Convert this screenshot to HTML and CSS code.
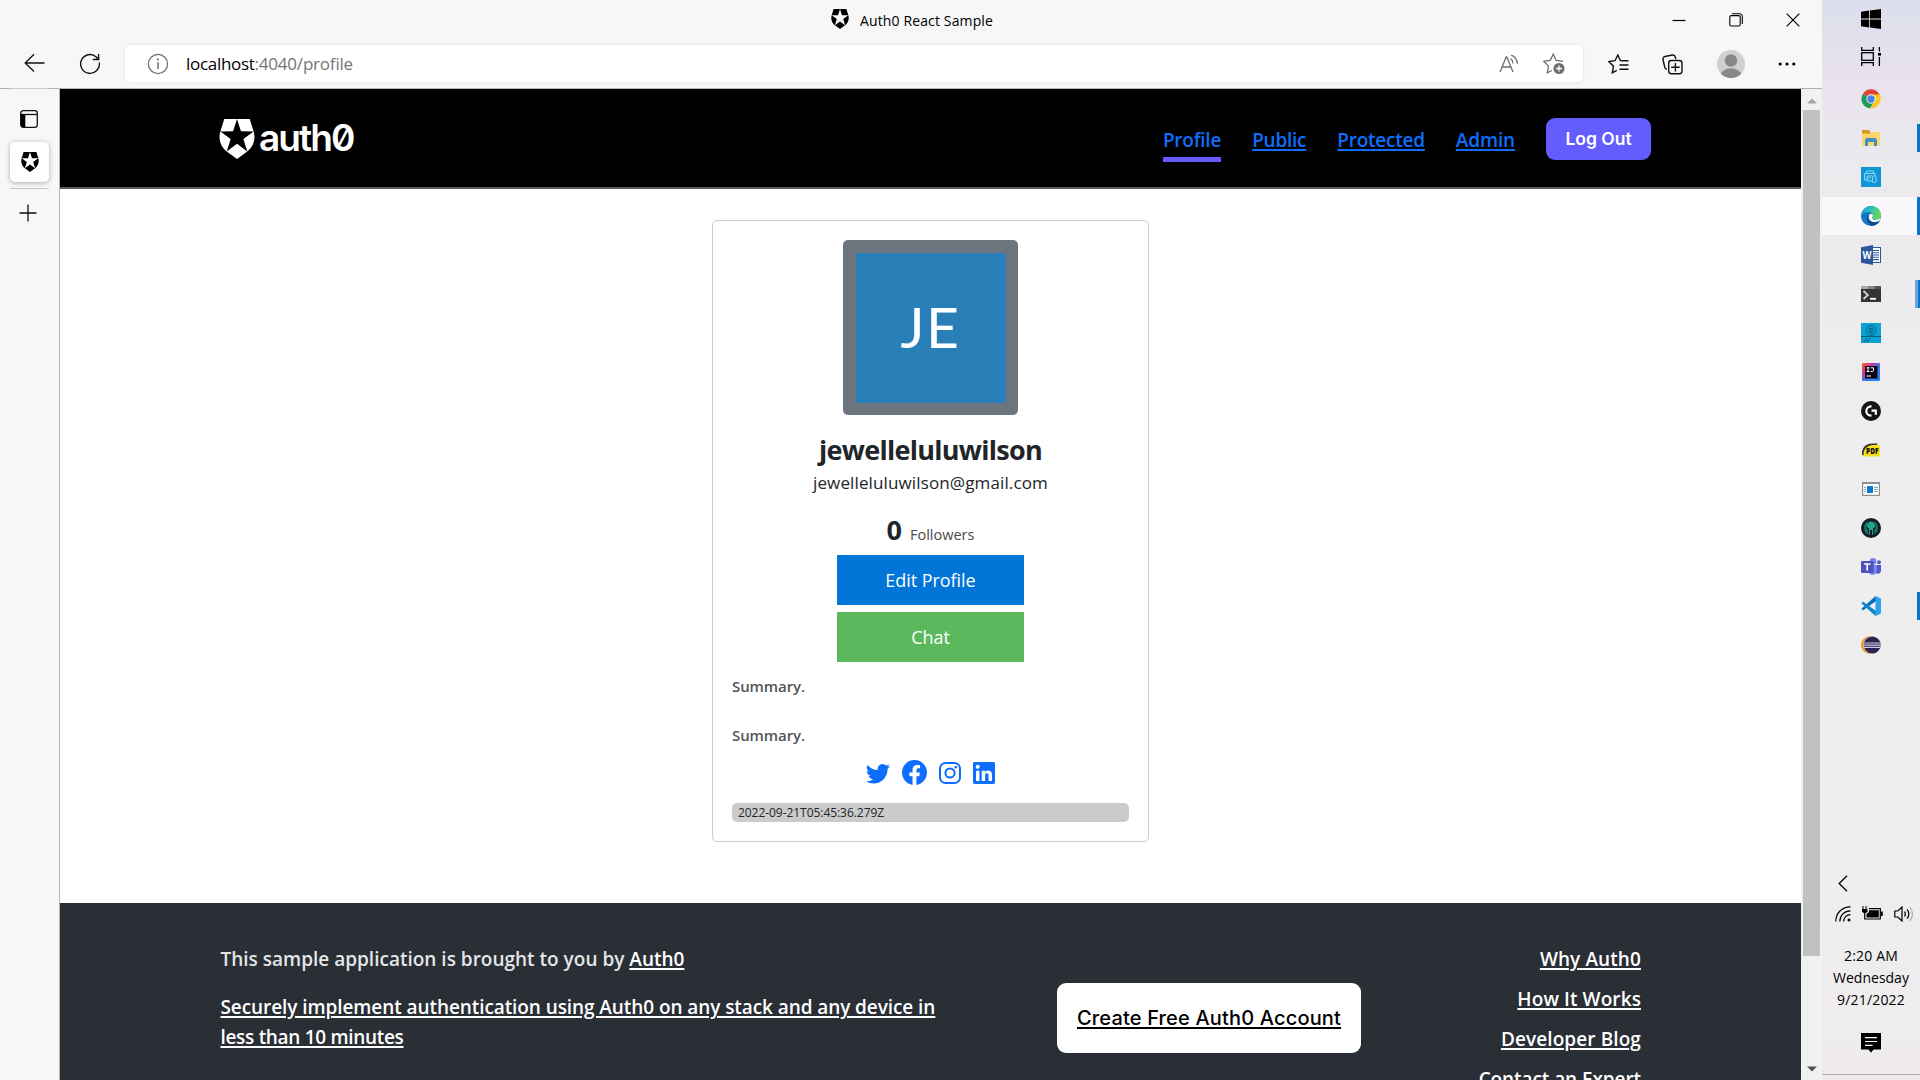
FILE: index.html
```
<!DOCTYPE html>
<html lang="en">
<head>
<meta charset="utf-8">
<title>Auth0 React Sample</title>
<link rel="stylesheet" href="styles.css">
</head>
<body>
<svg class="defs" width="0" height="0">
  <symbol id="shield" viewBox="1.5 0 21 24"><path d="M21.98 7.448L19.62 0H4.347L2.02 7.448c-1.352 4.312.03 9.206 3.815 12.015L12.007 24l6.157-4.552c3.755-2.81 5.182-7.688 3.815-12.015l-6.16 4.58 2.343 7.45-6.157-4.597-6.158 4.58 2.358-7.433-6.188-4.55 7.63-.045L12.008 0l2.356 7.404 7.615.044z"/></symbol>
</svg>

<div class="browser">
  <header class="titlebar">
    <div class="tab-title"><svg class="favicon" width="18" height="20"><use href="#shield"/></svg><span class="tab-name">Auth0 React Sample</span></div>
    <div class="window-controls">
      <svg width="14" height="14" viewBox="0 0 14 14"><path d="M.5 7.5h13" stroke="#000" stroke-width="1.2"/></svg>
      <svg width="14" height="14" viewBox="0 0 14 14" fill="none" stroke="#000" stroke-width="1.1"><rect x=".8" y="2.6" width="10.4" height="10.4" rx="1.5"/><path d="M3 .8h7.5a2.8 2.8 0 0 1 2.8 2.8V11"/></svg>
      <svg width="14" height="14" viewBox="0 0 14 14"><path d="M.7.7l12.6 12.6M13.3.7L.7 13.3" stroke="#000" stroke-width="1.2"/></svg>
    </div>
  </header>

  <div class="toolbar">
    <svg class="back" width="22" height="20" viewBox="0 0 22 20" fill="none" stroke="#111" stroke-width="1.3"><path d="M20.500 10H1.200M10 1.200L1.200 10l8.800 8.500"/></svg>
    <svg class="reload" width="22" height="22" viewBox="0 0 22 22" fill="none" stroke="#111" stroke-width="1.400"><path d="M20.300 9.500A9.400 9.400 0 1 1 17.300 4l2 2.200M19.600 1v5.500h-5.800"/></svg>
    <div class="address">
      <svg width="22" height="22" viewBox="0 0 22 22" fill="none" stroke="#6e6e6e" stroke-width="1.200"><circle cx="11" cy="11" r="9.600"/><path d="M11 9.300v6.700" stroke-width="1.500"/><circle cx="11" cy="6.500" r=".5"/></svg>
      <span class="url"><b>localhost</b>:4040/profile</span>
      <svg class="read" width="20" height="20" viewBox="0 0 20 20" fill="none" stroke="#6e6e6e" stroke-width="1.300"><path d="M1 18L7.200 3h.6L14 18M3.200 13h8.600M11.500 4.500c1.500 1 2.400 2.700 2.500 5M12.200 1.200c3.800 1.600 6 4.600 6.300 8.600"/></svg>
      <svg class="fav" width="22" height="22" viewBox="0 0 22 22" fill="none" stroke="#6e6e6e" stroke-width="1.300"><path d="M20 8.300l-6.800-1L10.200 1.200l-3 6.100-6.500 1 4.800 4.800-1.200 6.700 4.500-2.300"/><circle cx="16" cy="15.500" r="5.500" fill="#6e6e6e" stroke="none"/><path d="M16 12.500v6M13 15.500h6" stroke="#fff"/></svg>
    </div>
    <div class="actions">
      <svg width="21" height="20" viewBox="0 0 21 20" fill="none" stroke="#111" stroke-width="1.400"><path d="M12.500 6.700L9.800 1 7 6.700.9 7.600l4.600 4.600-1.200 6.600 4.500-2.400M12.500 6.800h8M11.500 11h9M11.500 15.300h9"/></svg>
      <svg width="21" height="21" viewBox="0 0 21 21" fill="none" stroke="#111" stroke-width="1.400"><path d="M4.800 15.300a2.600 2.600 0 0 1-2-2L1 5.500a2.600 2.600 0 0 1 2-3L10.300 1a2.600 2.600 0 0 1 3 2l.5 2"/><rect x="6.700" y="6.500" width="13.300" height="13.300" rx="2.700"/><path d="M13.400 9v8.500M9.200 13.200h8.500"/></svg>
      <svg width="28" height="28" viewBox="0 0 28 28"><defs><clipPath id="round"><circle cx="14" cy="14" r="14"/></clipPath></defs><g clip-path="url(#round)"><rect width="28" height="28" fill="#d2d0ce"/><circle cx="14" cy="10.500" r="6.200" fill="#8a8886"/><ellipse cx="14" cy="25.500" rx="10.500" ry="7.200" fill="#8a8886"/></g></svg>
      <svg width="18" height="4" viewBox="0 0 18 4"><circle cx="2.200" cy="2" r="1.600"/><circle cx="9" cy="2" r="1.600"/><circle cx="15.800" cy="2" r="1.600"/></svg>
    </div>
  </div>

  <div class="body-row">
    <aside class="tabs">
      <div class="rule"></div>
      <svg class="panes" width="18" height="18" viewBox="0 0 18 18"><rect x=".7" y=".7" width="16.600" height="16.600" rx="2.500" fill="none" stroke="#111" stroke-width="1.300"/><path d="M1 4.500h4.300V17H3a2 2 0 0 1-2-2z"/><path d="M1 4.500h16" stroke="#111" stroke-width="1.300"/></svg>
      <div class="active-tab"><svg width="18" height="20"><use href="#shield"/></svg></div>
      <div class="rule"></div>
      <svg class="plus" width="18" height="18" viewBox="0 0 18 18"><path d="M9 .5v17M.5 9h17" stroke="#111" stroke-width="1.300"/></svg>
    </aside>

    <div class="page">
      <nav class="nav">
        <a class="brand"><svg width="36" height="40" fill="#fff"><use href="#shield"/></svg><span class="wordmark">auth0</span></a>
        <div class="nav-links">
          <a class="active">Profile</a><a>Public</a><a>Protected</a><a class="admin">Admin</a>
          <button class="logout">Log Out</button>
        </div>
      </nav>

      <main class="content">
        <section class="card">
          <div class="avatar"><div class="initials">JE</div></div>
          <h1 class="name">jewelleluluwilson</h1>
          <p class="email">jewelleluluwilson@gmail.com</p>
          <p class="followers"><b>0</b><span>Followers</span></p>
          <button class="btn edit">Edit Profile</button>
          <button class="btn chat">Chat</button>
          <p class="summary">Summary.</p>
          <p class="summary second">Summary.</p>
          <div class="social">
            <svg width="24" height="24" viewBox="0 0 16 16"><path d="M5.026 15c6.038 0 9.341-5.003 9.341-9.334 0-.14 0-.282-.006-.422A6.685 6.685 0 0 0 16 3.542a6.658 6.658 0 0 1-1.889.518 3.301 3.301 0 0 0 1.447-1.817 6.533 6.533 0 0 1-2.087.793A3.286 3.286 0 0 0 7.875 6.030a9.325 9.325 0 0 1-6.767-3.429 3.289 3.289 0 0 0 1.018 4.382A3.323 3.323 0 0 1 .64 6.575v.045a3.288 3.288 0 0 0 2.632 3.218 3.203 3.203 0 0 1-.865.115 3.230 3.230 0 0 1-.614-.057 3.283 3.283 0 0 0 3.067 2.277A6.588 6.588 0 0 1 .78 13.580a6.320 6.320 0 0 1-.78-.045A9.344 9.344 0 0 0 5.026 15z"/></svg>
            <svg width="25" height="25" viewBox="0 0 16 16"><path d="M16 8.049c0-4.446-3.582-8.050-8-8.050C3.580 0-.002 3.603-.002 8.050c0 4.017 2.926 7.347 6.750 7.951v-5.625h-2.030V8.050H6.750V6.275c0-2.017 1.195-3.131 3.022-3.131.876 0 1.791.157 1.791.157v1.980h-1.009c-.993 0-1.303.621-1.303 1.258v1.510h2.218l-.354 2.326H9.250V16c3.824-.604 6.750-3.934 6.750-7.951z"/></svg>
            <svg width="22" height="22" viewBox="0 0 22 22"><rect x="1" y="1" width="20" height="20" rx="5.500" fill="none" stroke="#0d6efd" stroke-width="2"/><circle cx="11" cy="11" r="4.600" fill="none" stroke="#0d6efd" stroke-width="2"/><circle cx="16.800" cy="5.200" r="1.300"/></svg>
            <svg width="22" height="22" viewBox="3 3 18 18"><path d="M19.800 3A1.200 1.200 0 0 1 21 4.200v15.600a1.200 1.200 0 0 1-1.200 1.200H4.200A1.200 1.200 0 0 1 3 19.800V4.200A1.200 1.200 0 0 1 4.200 3h15.600m-1.300 15.500v-5.300a3.260 3.260 0 0 0-3.260-3.260c-.85 0-1.840.52-2.320 1.300v-1.110h-2.790v8.370h2.790v-4.930c0-.77.62-1.400 1.390-1.400a1.400 1.400 0 0 1 1.400 1.400v4.930h2.790M6.880 8.560a1.680 1.680 0 0 0 1.680-1.680c0-.93-.75-1.690-1.680-1.690a1.690 1.690 0 0 0-1.690 1.690c0 .93.76 1.680 1.690 1.680m1.390 9.940v-8.370H5.500v8.370h2.770z"/></svg>
          </div>
          <div class="stamp">2022-09-21T05:45:36.279Z</div>
        </section>
      </main>

      <footer class="footer">
        <div class="about">
          <p><span class="lead">This sample application is brought to you by</span> <a>Auth0</a></p>
          <p class="pitch"><a>Securely implement authentication using Auth0 on any stack and any device in<br><span class="tail">less than 10 minutes</span></a></p>
        </div>
        <a class="create">Create Free Auth0 Account</a>
        <div class="resources"><a>Why Auth0</a><a>How It Works</a><a>Developer Blog</a><a class="expert">Contact an Expert</a></div>
      </footer>
    </div>

    <div class="scrollbar">
      <svg width="10" height="6" viewBox="0 0 10 6"><path d="M0 5.500L5 .5l5 5z" fill="#a3a3a3"/></svg>
      <div class="thumb"></div>
      <svg class="down" width="10" height="6" viewBox="0 0 10 6"><path d="M0 .5l5 5 5-5z" fill="#505050"/></svg>
    </div>
  </div>
</div>

<aside class="taskbar">
  <div class="sys"><svg width="20" height="20" viewBox="0 0 20 20"><path d="M0 2.800L8.200 1.600V9.600H0zM9 1.500L20 0v9.600H9zM0 10.400h8.200v8L0 17.300zM9 10.400h11V20L9 18.500z"/></svg></div>
  <div class="sys view"><svg width="20" height="19" viewBox="0 0 20 19" fill="none" stroke="#000" stroke-width="1.300"><path d="M.7 0v3.300h11.600V0M.7 19v-3.300h11.600V19"/><rect x=".7" y="5.700" width="11.600" height="7.600"/><path d="M18.400 0v4.500M18.400 10v9"/><path d="M17 6h3v2.600h-3z" fill="#000" stroke="none"/></svg></div>

  <div class="apps">
    <div class="app"><svg width="20" height="20" viewBox="0 0 20 20"><path d="M10 10L1.800 5A9.500 9.500 0 0 1 18.500 5.600z" fill="#dd4437"/><path d="M10 10L1.800 5a9.500 9.500 0 0 0 7.200 14.400l4.500-7.600z" fill="#1c9b55"/><path d="M10 5.600h8.500A9.500 9.500 0 0 1 9 19.400l4.800-7.300z" fill="#fdc81c"/><circle cx="10" cy="10" r="4.700" fill="#f5f5f5"/><circle cx="10" cy="10" r="3.700" fill="#4582ea"/></svg></div>
    <div class="app running"><svg width="20" height="20" viewBox="0 0 20 20"><path d="M1 2h7l1.500 2v3H1z" fill="#d79a1b"/><path d="M1 5.500h9L11.500 4H19v13.500H1z" fill="#fcd667"/><path d="M4 18v-5.500A2.500 2.500 0 0 1 6.500 10h7a2.500 2.500 0 0 1 2.500 2.500V18h-3v-4H7v4z" fill="#4390c8"/></svg></div>
    <div class="app"><svg width="20" height="20" viewBox="0 0 20 20"><rect width="20" height="20" fill="#0f97d5"/><g fill="none" stroke="#8ed5f3" stroke-width="1"><path d="M5.500 6V4h7v2M6 13H3.500V6.500H14V9M6 9h5M6 11h4M6 9v5h5"/><rect x="11.500" y="9" width="3.500" height="6.500" rx=".8"/></g></svg></div>
    <div class="app current"><svg width="20" height="20" viewBox="0 0 20 20"><defs><linearGradient id="eg" x1="0" y1="0" x2="1" y2=".4"><stop offset="0" stop-color="#159bd0"/><stop offset=".55" stop-color="#35c1b7"/><stop offset="1" stop-color="#6ad84f"/></linearGradient></defs><circle cx="10" cy="10" r="10" fill="#1377c8"/><path d="M.2 8.800C1 3.500 5 0 10 0c5.500 0 10 4 10 8.500 0 3-2.500 5-5.300 5-2.300 0-3.500-.8-3.500-1.500 0-.8.900-1 .900-2.500 0-2-2-3.600-5-3.600C4 5.900 1.300 7 .2 8.800z" fill="url(#eg)"/><path d="M7.600 8.200c-3 2.300-2.200 8.800 3.200 11.700 3.500-.2 6.500-2 8-4.600.3-.5-.2-.7-.6-.5-5 2.300-10.800-.6-10.600-6.600z" fill="#134b93"/><path d="M7.700 10.500C8 8 9.600 7 11.500 8.200c1.200 1.800-.8 3-.2 4.200.6 1 2 1.400 3.700 1.400 2 0 3.700-1 4.700-2.800-.3 2.300-1 3.500-1.800 4.300C12 17.500 7.400 15 7.700 10.500z" fill="#f7f8fa"/></svg></div>
    <div class="app"><svg width="20" height="20" viewBox="0 0 20 20"><rect x="9" y="2.500" width="10.500" height="15" fill="#fff" stroke="#2b579a"/><path d="M12 5.500h6M12 7.800h6M12 10h6M12 12.300h6M12 14.600h6" stroke="#2b579a" stroke-width="1.100"/><path d="M0 2.200L12 0v20L0 17.800z" fill="#2b579a"/><text x="1.400" y="14" class="glyph" font-size="11" textLength="9" lengthAdjust="spacingAndGlyphs">W</text></svg></div>
    <div class="app running stacked"><svg width="20" height="20" viewBox="0 0 20 20"><rect y="2" width="20" height="16" fill="#333"/><path d="M0 2h7v3H0z" fill="#aaa"/><path d="M7 2h7v3H7z" fill="#858585"/><path d="M14 2h6v3h-6z" fill="#555"/><path d="M2.500 7l4.300 4-4.300 4" fill="none" stroke="#ccc" stroke-width="2"/><path d="M9 14.800h6" stroke="#fff" stroke-width="1.800"/></svg></div>
    <div class="app"><svg width="20" height="20" viewBox="0 0 20 20"><rect width="20" height="20" fill="#0ba2d2"/><g fill="none" stroke="#075f83"><circle cx="10" cy="7.500" r="5"/><circle cx="10" cy="7.500" r="2.500"/><path d="M10 6v3M0 13.500h20M3 19l3-4M6 19l3-4" stroke-width="1.100"/></g></svg></div>
    <div class="app"><svg width="20" height="20" viewBox="0 0 20 20"><defs><linearGradient id="ij" x1="0" y1="0" x2="1" y2="1"><stop offset="0" stop-color="#f9622d"/><stop offset=".3" stop-color="#d3359a"/><stop offset=".55" stop-color="#3a78f2"/><stop offset="1" stop-color="#1f87f5"/></linearGradient></defs><rect x="1" y="1" width="18" height="18" rx="1" fill="url(#ij)"/><rect x="4" y="4" width="12.500" height="12.500" fill="#0b0312"/><path d="M5.500 5.800h3M7 5.500v4M5.500 9.500h3M9.800 5.800h2.700v2.700c0 .7-.5 1-1.300 1H9.800M5.500 14h4.500" fill="none" stroke="#fff" stroke-width="1"/></svg></div>
    <div class="app"><svg width="20" height="20" viewBox="0 0 20 20"><circle cx="10" cy="10" r="10" fill="#141414"/><path d="M10.500 5.300H10a4.700 4.700 0 0 0 0 9.400h.5M10.500 9.700h4.300v4" fill="none" stroke="#fff" stroke-width="2.200"/></svg></div>
    <div class="app"><svg width="20" height="20" viewBox="0 0 20 20"><path d="M1 15C.5 8 4 4 11 3.500h6L5 16z" fill="#333"/><path d="M2.500 16.500C2 9 6 5.500 12 5h6q1 0 1 1v9.500q0 1-1 1z" fill="#f6e21b"/><text x="5" y="14.300" class="glyph dark" font-size="8" textLength="12.500" lengthAdjust="spacingAndGlyphs">PDF</text></svg></div>
    <div class="app"><svg width="20" height="20" viewBox="0 0 20 20"><rect x="1.600" y="3.600" width="16.800" height="12.800" fill="#fff" stroke="#8b8f92" stroke-width="1.200"/><path d="M1.600 4.500h16.800" stroke="#8b8f92"/><rect x="6" y="7" width="6" height="7" fill="#1377d0"/><path d="M3 8.500h2M3 10.500h2M3 12.500h2M13 8.500h4M13 10.500h4M13 12.500h4" stroke="#8aa" stroke-width="1"/></svg></div>
    <div class="app"><svg width="20" height="20" viewBox="0 0 20 20"><circle cx="10" cy="10" r="10" fill="#141c23"/><path d="M7.500 3a7.500 7.500 0 0 0-.5 13.500V12a4 4 0 0 1-1-5zM12.500 3a7.500 7.500 0 0 1 .5 13.500V12a4 4 0 0 0 1-5z" fill="#176f68"/><path d="M10 3.500c2.500 0 4 2.500 4 4.500 0 1.500-1.500 2-2 3v6h-1v-5H9v5H8v-6c-.5-1-2-1.500-2-3 0-2 1.500-4.500 4-4.500z" fill="#20a58b"/></svg></div>
    <div class="app"><svg width="20" height="20" viewBox="0 0 20 20"><circle cx="12" cy="4.300" r="3.400" fill="#7b83eb"/><circle cx="18" cy="5.200" r="2" fill="#5059c9"/><path d="M15 8h5v6a3 3 0 0 1-5 2z" fill="#5059c9"/><path d="M8 8h8v6a4.600 4.600 0 0 1-8.800 1z" fill="#7b83eb"/><rect y="4" width="12.500" height="12" rx="1" fill="#4b53bc"/><path d="M3 7h6.500M6.200 7v6.500" stroke="#fff" stroke-width="1.700"/></svg></div>
    <div class="app running"><svg width="20" height="20" viewBox="0 0 20 20"><path d="M14.500 0L20 2.500v15L14.500 20z" fill="#29a3ea"/><path d="M14.500 0L.4 12.800l1.500 1.700L15 5z" fill="#0a72b4"/><path d="M14.500 20L.4 7.200l1.500-1.700L15 15z" fill="#1185cc"/></svg></div>
    <div class="app"><svg width="20" height="20" viewBox="0 0 20 20"><circle cx="9" cy="10" r="9" fill="#f7941e"/><circle cx="11.200" cy="10" r="9" fill="#e9e6ef"/><circle cx="11.200" cy="10" r="8.600" fill="#2c2255"/><path d="M2.800 8h17M2.600 10.200h17.400M2.800 12.400h17" stroke="#cfcbe0" stroke-width="1.200"/></svg></div>
  </div>

  <div class="tray">
    <svg class="chevron" width="10" height="17" viewBox="0 0 10 17"><path d="M9 .7L1.200 8.500 9 16.300" fill="none" stroke="#000" stroke-width="1.300"/></svg>
    <div class="status">
      <svg width="16" height="16" viewBox="0 0 16 16" fill="none" stroke="#000" stroke-width="1.200"><path d="M.8 15.500C.8 7 7 .8 15.500.8M4.800 15.500C4.800 9.300 9.300 4.800 15.500 4.800M8.700 15.500c0-3.900 2.900-6.800 6.800-6.800"/><circle cx="14" cy="14" r="1.500" fill="#000" stroke="none"/></svg>
      <svg width="21" height="15" viewBox="0 0 21 15"><path d="M1 0v3M4 0v3" stroke="#000"/><path d="M0 3h5.500v2.500L4 7H1.500L0 5.500z"/><path d="M2.700 6v7h15.600V2.600H7" fill="none" stroke="#000" stroke-width="1.200"/><path d="M7 4.200h9.800v7.400H4.500V8L7 6z"/><path d="M19 5.500h1.800v4.500H19z"/></svg>
      <svg width="20" height="16" viewBox="0 0 20 16" fill="none" stroke="#000" stroke-width="1.200"><path d="M.8 5h3L8 1v14l-4.200-4h-3z"/><path d="M10.500 5.500q1.800 2.500 0 5M13 3.300q3.600 4.700 0 9.400"/><path d="M15.700 1q5.500 7 0 14" stroke="#aaa"/></svg>
    </div>
    <div class="clock"><span class="time">2:20 AM</span><span>Wednesday</span><span class="date">9/21/2022</span></div>
    <svg class="notes" width="20" height="20" viewBox="0 0 20 20"><path d="M0 0h20v16.500h-7.500L10 19.700 7.500 16.500H0z"/><path d="M4 4.700h12M4 8.500h12M4 12.300h7.500" stroke="#fff" stroke-width="1.200"/></svg>
    <div class="edge"></div>
  </div>
</aside>
</body>
</html>
```
FILE: styles.css
```
* { box-sizing: border-box; }
body { margin: 0; display: flex; width: 1920px; height: 1080px; overflow: hidden; font-family: "Open Sans", "Noto Sans", sans-serif; color: #212529; }
svg { display: block; flex: none; }
p, h1 { margin: 0; }
button { border: 0; padding: 0; font-family: inherit; }
.defs { position: absolute; }
.glyph { font-family: "Open Sans", sans-serif; font-weight: 700; fill: #fff; }
.glyph.dark { font-weight: 800; fill: #111; }

.browser { width: 1822px; display: flex; flex-direction: column; background: #f7f7f7; }
.titlebar { height: 41px; display: grid; grid-template-columns: 831px 1fr auto; }
.tab-title { grid-column: 2; display: flex; padding-top: 9px; gap: 11px; }
.tab-name { font-size: 14px; line-height: 24px; letter-spacing: .13px; color: #000; }
.window-controls { display: flex; gap: 43px; padding: 13px 22px 0 0; }

.toolbar { height: 48px; display: flex; border-bottom: 1px solid #b0b0b0; }
.back { margin: 12px 0 0 24px; }
.reload { margin: 12px 0 0 33px; }
.address { display: flex; align-items: center; width: 1458px; height: 37px; margin: 4px 0 0 24px; padding: 0 18px 0 22px; background: #fff; border-radius: 5px; box-shadow: 0 0 3px rgba(0,0,0,.12); }
.url { margin-left: 17px; flex: 1; font-size: 17px; line-height: 36px; letter-spacing: -.2px; color: #757575; }
.url b { font-weight: 400; letter-spacing: -.3px; color: #000; }
.read { margin-right: 24px; }
.actions { flex: 1; display: flex; align-items: center; justify-content: space-between; padding: 0 26px 0 25px; height: 46px; }

.body-row { flex: 1; display: flex; min-height: 0; }
.tabs { width: 60px; border-right: 1px solid #b5b5b5; padding-left: 10px; margin-top: -1px; }
.rule { height: 1px; width: 39px; background: #c8c8c8; }
.panes { margin: 21px 0 0 10px; }
.active-tab { width: 39px; height: 40px; margin: 14px 0 6px; border-radius: 5px; background: #fff; box-shadow: 0 1px 5px rgba(0,0,0,.3); display: grid; place-items: center; }
.plus { margin: 15px 0 0 9px; }

.page { width: 1741px; background: #fff; display: flex; flex-direction: column; overflow: hidden; }
.nav { height: 100px; flex: none; display: flex; justify-content: space-between; align-items: flex-start; background: #000; border-bottom: 2px solid #5a5a5a; padding: 29px 150px 0 159px; }
.brand { display: flex; gap: 4px; padding-top: 1px; }
.wordmark { font: 600 37px/38px Inter, sans-serif; letter-spacing: -1.900px; color: #fff; font-feature-settings: "zero"; }
.nav-links { display: flex; gap: 31px; }
.nav-links a { height: 34px; margin-top: 10px; font-size: 19px; font-weight: 600; line-height: 24px; letter-spacing: -.24px; color: #0d6efd; text-decoration: underline; text-decoration-thickness: 2px; text-underline-offset: 2px; text-decoration-skip-ink: none; }
.nav-links .admin { letter-spacing: -.14px; }
.nav-links .active { text-decoration: none; border-bottom: 5px solid #635dff; }
.logout { width: 105px; height: 42px; border-radius: 9px; background: #635dff; color: #fff; font: 600 17.500px/42px Inter, sans-serif; }

.content { flex: none; height: 714px; padding-top: 31px; }
.card { width: 437px; margin-left: 652px; padding: 19px; border: 1px solid #ccc; border-radius: 5px; display: flex; flex-direction: column; align-items: center; }
.avatar { width: 175px; height: 175px; padding: 12.500px; border-radius: 5px; background: #6c757d; }
.initials { height: 150px; background: #2980b9; color: #fff; text-align: center; font: 400 57px/146px Lato, sans-serif; letter-spacing: 1.500px; }
.name { margin-top: 18px; font-size: 27px; line-height: 33px; letter-spacing: -.71px; }
.email { margin-top: 5px; font-size: 17px; line-height: 24px; letter-spacing: .13px; }
.followers { display: flex; align-items: baseline; gap: 8px; margin-top: 18px; font-size: 14.500px; line-height: 33px; color: #4a4a4a; }
.followers b { font-size: 27px; color: #212529; }
.btn { width: 187px; height: 50px; color: #fff; font-size: 18px; line-height: 48px; letter-spacing: -.05px; }
.edit { margin-top: 4px; background: #0275d8; }
.chat { margin-top: 7px; background: #5cb85c; }
.summary { align-self: stretch; margin-top: 13px; font-size: 15px; font-weight: 600; line-height: 22px; letter-spacing: -.09px; color: #555; }
.summary.second { margin-top: 27px; }
.social { display: flex; align-items: center; gap: 12px; height: 25px; margin-top: 14px; fill: #0d6efd; }
.stamp { align-self: stretch; height: 19px; margin-top: 18px; padding-left: 6px; border-radius: 5px; background: #cbcbcb; font-size: 12px; line-height: 19px; letter-spacing: -.05px; }

.footer { flex: 1; display: flex; align-items: flex-start; background: #2a2e35; padding: 41px 160px 0; font-size: 19px; font-weight: 600; line-height: 30px; color: #e4e6e8; }
.footer a { color: #fff; text-decoration: underline; text-decoration-thickness: 2px; text-underline-offset: 2px; }
.about { width: 837px; padding-left: .5px; }
.pitch { margin-top: 18px; letter-spacing: -.08px; }
.tail { letter-spacing: -.31px; }
.footer .create { width: 304px; height: 70px; margin-top: 39px; border-radius: 9px; background: #fff; color: #000; text-align: center; font: 500 20px/70px Inter, sans-serif; letter-spacing: .17px; }
.resources { margin-left: auto; display: flex; flex-direction: column; align-items: flex-end; gap: 10px; letter-spacing: .1px; }
.resources .expert { letter-spacing: -.08px; }

.scrollbar { width: 21px; background: #f1f1f1; display: flex; flex-direction: column; align-items: center; padding: 9px 0 8px; }
.thumb { width: 17px; height: 846px; margin-top: 6px; background: #c1c1c1; }
.down { margin-top: auto; }

.taskbar { width: 98px; display: flex; flex-direction: column; background: linear-gradient(#dbdfeb 0, #e9e1ef 80px, #eae9ed 150px, #eeebec 300px, #eeeeee 450px, #eeeeef 900px, #efebeb 1080px); }
.sys { height: 38px; display: grid; place-items: center; }
.view { padding-bottom: 2px; }
.apps { margin-top: 3px; }
.app { height: 39px; padding-top: 10px; display: flex; justify-content: center; }
.running { background: linear-gradient(#0a74c9, #0a74c9) right 6px / 3px 28px no-repeat; background-position: right 0 top 6px; }
.stacked { background: linear-gradient(90deg, #63a8e0 3px, #0a74c9 3px) right 0 top 6px / 5px 28px no-repeat; }
.current { height: 38px; margin: 1px 0 0; padding-top: 9px; background: linear-gradient(#0a74c9, #0a74c9) right / 3px 100% no-repeat, #f8f8fa; }
.tray { margin-top: auto; height: 205px; display: flex; flex-direction: column; align-items: center; }
.chevron { align-self: flex-start; margin-left: 16px; }
.status { display: flex; gap: 11px; margin-top: 14px; padding-left: 6px; }
.clock { display: flex; flex-direction: column; align-items: center; margin-top: 23px; font-size: 14px; line-height: 22px; color: #000; }
.time, .date { letter-spacing: .18px; }
.notes { margin-top: 22px; }
.edge { width: 98px; height: 1px; margin-top: 21px; background: #b3b1b2; }
```
